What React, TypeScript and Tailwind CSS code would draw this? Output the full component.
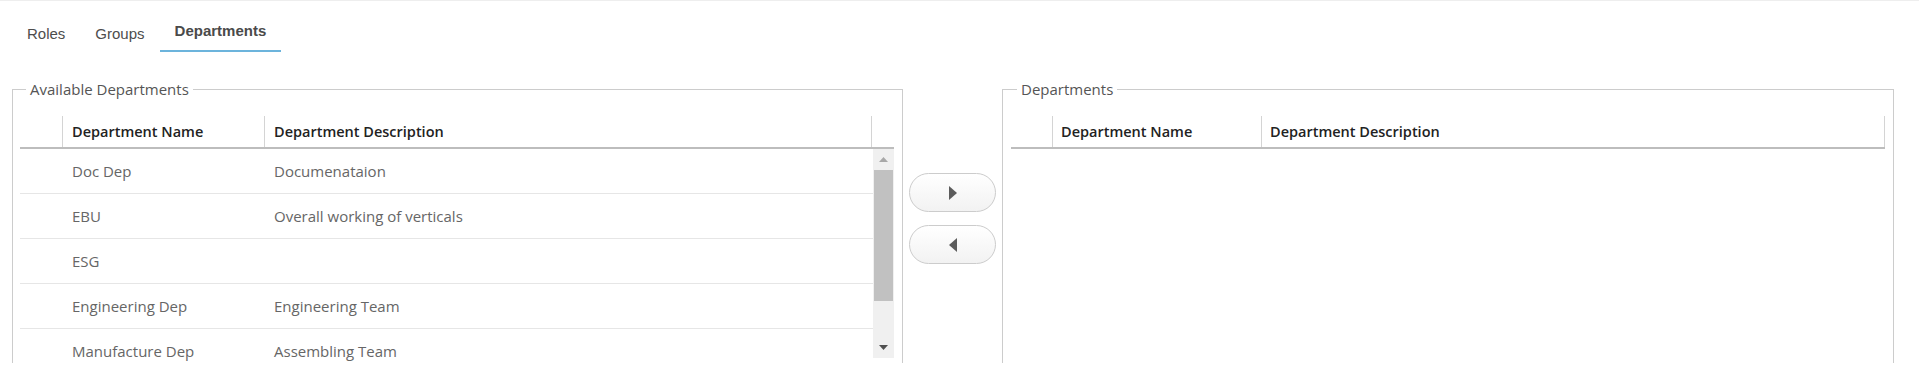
import React from 'react';

type Department = {
    name: string;
    description: string;
};

const availableDepartments: Department[] = [
    { name: 'Doc Dep', description: 'Documenataion' },
    { name: 'EBU', description: 'Overall working of verticals' },
    { name: 'ESG', description: '' },
    { name: 'Engineering Dep', description: 'Engineering Team' },
    { name: 'Manufacture Dep', description: 'Assembling Team' },
    { name: 'Quality Dep', description: 'Quality Assurance' },
];

function Tabs() {
    const tabs = ['Roles', 'Groups', 'Departments'];
    const active = 'Departments';

    return (
        <div className="flex pl-[12px] font-['Liberation_Sans',Arial,sans-serif] text-[15px] leading-[18px]">
            {tabs.map((tab) =>
                tab === active ? (
                    <div
                        key={tab}
                        className="px-[15px] pt-[21px] pb-[10px] border-b-2 border-[#6cb4dc] font-bold text-[#4a4a4a]"
                    >
                        {tab}
                    </div>
                ) : (
                    <div
                        key={tab}
                        className="px-[15px] pt-[24px] pb-[7px] border-b-2 border-transparent text-[#4d4d4d]"
                    >
                        {tab}
                    </div>
                )
            )}
        </div>
    );
}

function ScrollArrow({ up }: { up: boolean }) {
    return (
        <div className="h-[21px] flex items-center justify-center">
            <svg width="9" height="5" viewBox="0 0 9 5">
                {up ? (
                    <path d="M4.5 0L9 5H0z" fill="#a8a8a8" />
                ) : (
                    <path d="M0 0h9L4.5 5z" fill="#505050" />
                )}
            </svg>
        </div>
    );
}

function Legend({ children }: { children: React.ReactNode }) {
    return (
        <legend className="ml-[6px] px-[4px] text-[15px] leading-[20px] text-[#555555]">
            {children}
        </legend>
    );
}

function AvailableTable() {
    return (
        <div className="w-[874px]">
            <div className="flex h-[33px] border-b-2 border-[#bdbdbd] text-[14.5px] font-semibold text-[#222222]">
                <div className="w-[42px]" />
                <div className="w-[202px] border-l border-[#d4d4d4] pl-[9px] flex items-center">
                    Department Name
                </div>
                <div className="w-[608px] border-l border-r border-[#d4d4d4] pl-[9px] flex items-center">
                    Department Description
                </div>
            </div>
            <div className="flex">
                <div className="w-[853px]">
                    {availableDepartments.map((dep) => (
                        <div
                            key={dep.name}
                            className="flex h-[45px] border-b border-[#e6e6e6] text-[15px] text-[#666666]"
                        >
                            <div className="w-[42px]" />
                            <div className="w-[202px] pl-[10px] flex items-center">{dep.name}</div>
                            <div className="flex-1 pl-[10px] flex items-center">{dep.description}</div>
                        </div>
                    ))}
                </div>
                <div className="w-[21px] h-[209px] bg-[#f0f0f0] flex flex-col">
                    <ScrollArrow up />
                    <div className="h-[131px] mx-[1px] bg-[#c1c1c1]" />
                    <div className="flex-1" />
                    <ScrollArrow up={false} />
                </div>
            </div>
        </div>
    );
}

function SelectedTable() {
    return (
        <div className="w-[874px]">
            <div className="flex h-[33px] border-b-2 border-[#bdbdbd] text-[14.5px] font-semibold text-[#222222]">
                <div className="w-[41px]" />
                <div className="w-[209px] border-l border-[#d4d4d4] pl-[8px] flex items-center">
                    Department Name
                </div>
                <div className="w-[624px] border-l border-r border-[#d4d4d4] pl-[8px] flex items-center">
                    Department Description
                </div>
            </div>
        </div>
    );
}

function MoveButton({ direction }: { direction: 'right' | 'left' }) {
    return (
        <button className="w-[87px] h-[39px] rounded-full border border-[#cccccc] bg-gradient-to-b from-white to-[#f2f2f2] flex items-center justify-center">
            <svg width="8" height="14" viewBox="0 0 8 14">
                {direction === 'right' ? (
                    <path d="M0 0L8 7L0 14z" fill="#5c5c5c" />
                ) : (
                    <path d="M8 0L0 7L8 14z" fill="#5c5c5c" />
                )}
            </svg>
        </button>
    );
}

export default function App() {
    return (
        <div className="w-[1919px] h-[379px] bg-white border-t border-[#eeeeee] font-['Open_Sans','Noto_Sans',sans-serif]">
            <Tabs />

            <div className="mt-[27px] h-[284px] overflow-hidden flex pl-[12px]">
                <fieldset className="w-[891px] h-[420px] border border-[#cccccc] pl-[7px] pr-[8px] pt-[17px]">
                    <Legend>Available Departments</Legend>
                    <AvailableTable />
                </fieldset>

                <div className="w-[99px] px-[6px] pt-[94px] flex flex-col gap-[13px]">
                    <MoveButton direction="right" />
                    <MoveButton direction="left" />
                </div>

                <fieldset className="w-[892px] h-[420px] border border-[#cccccc] pl-[8px] pr-[8px] pt-[17px]">
                    <Legend>Departments</Legend>
                    <SelectedTable />
                </fieldset>
            </div>
        </div>
    );
}
